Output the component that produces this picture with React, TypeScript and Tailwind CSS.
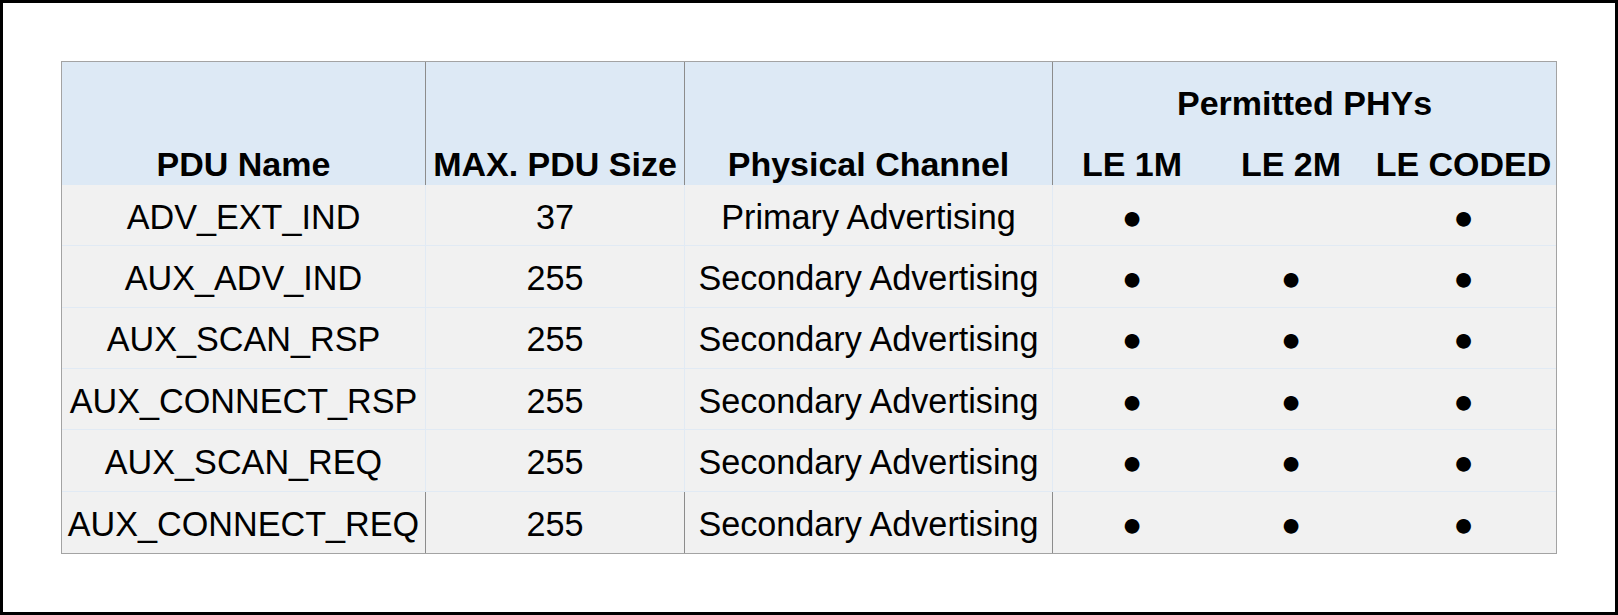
const rows = [
  { name: "ADV_EXT_IND", size: "37", channel: "Primary Advertising", phy: [true, false, true] },
  { name: "AUX_ADV_IND", size: "255", channel: "Secondary Advertising", phy: [true, true, true] },
  { name: "AUX_SCAN_RSP", size: "255", channel: "Secondary Advertising", phy: [true, true, true] },
  { name: "AUX_CONNECT_RSP", size: "255", channel: "Secondary Advertising", phy: [true, true, true] },
  { name: "AUX_SCAN_REQ", size: "255", channel: "Secondary Advertising", phy: [true, true, true] },
  { name: "AUX_CONNECT_REQ", size: "255", channel: "Secondary Advertising", phy: [true, true, true] },
];

const head = "bg-[#dde9f5] font-bold text-[34px] leading-[33px] flex items-end justify-center pb-[4px] whitespace-nowrap";
const divider = "border-r border-[#8c8c8c]";

const App = () => {
  return (
    <div
      className="w-[1618px] h-[615px] border-[3px] border-black bg-white pl-[58px] pt-[58px] text-black text-[34.2px] leading-normal"
      style={{ fontFamily: '"Liberation Sans", Arial, sans-serif' }}
    >
      <div className="w-[1496px] border border-[#a3a3a3] grid grid-cols-[364px_259px_368px_158px_160px_185px] grid-rows-[62px_61px_repeat(6,61.33px)]">
        {/* header */}
        <div className={`${head} ${divider} row-span-2`}>PDU Name</div>
        <div className={`${head} ${divider} row-span-2`}>MAX. PDU Size</div>
        <div className={`${head} ${divider} row-span-2`}>Physical Channel</div>
        <div className={`${head} col-span-3`}>Permitted PHYs</div>
        <div className={head}>LE 1M</div>
        <div className={head}>LE 2M</div>
        <div className={head}>LE CODED</div>

        {/* body */}
        {rows.map((row, i) => {
          const line = i < rows.length - 1 ? "border-b border-[#e1eaf4]" : "";
          const cell = `bg-[#f1f1f1] flex items-center justify-center pt-[4px] whitespace-nowrap ${line}`;
          return [
            <div key={`${row.name}-n`} className={`${cell} ${divider}`}>{row.name}</div>,
            <div key={`${row.name}-s`} className={`${cell} ${divider}`}>{row.size}</div>,
            <div key={`${row.name}-c`} className={`${cell} ${divider}`}>{row.channel}</div>,
            ...row.phy.map((on, j) => (
              <div key={`${row.name}-p${j}`} className={cell}>
                {on ? "●" : ""}
              </div>
            )),
          ];
        })}
      </div>
    </div>
  );
};

export default App;
